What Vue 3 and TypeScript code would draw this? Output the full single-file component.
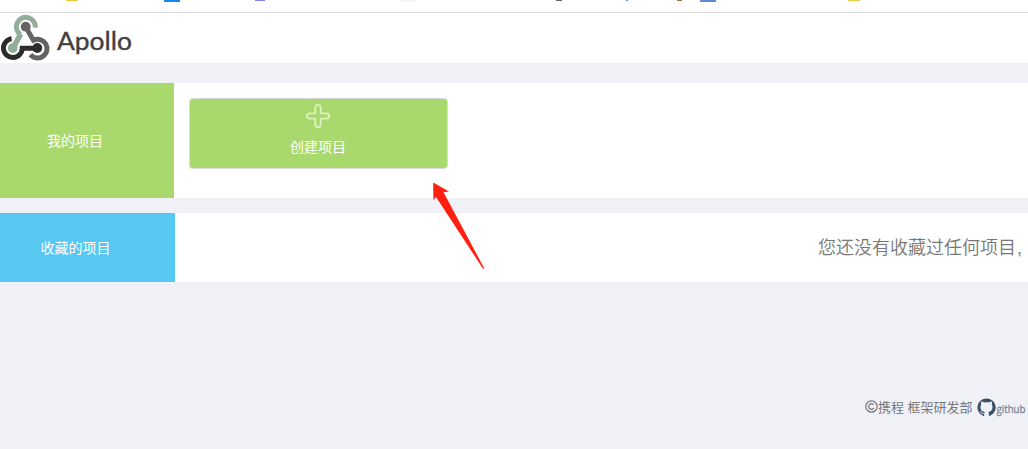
<script setup lang="ts">
interface Tab { left: number; width: number; height: number; color: string }

const tabs: Tab[] = [
  { left: 66, width: 12, height: 1, color: '#edc23d' },
  { left: 164, width: 16, height: 2, color: '#1787f5' },
  { left: 255, width: 10, height: 1, color: '#8585ed' },
  { left: 400, width: 16, height: 2, color: '#f5f5f5' },
  { left: 556, width: 6, height: 1, color: '#65656b' },
  { left: 626, width: 2, height: 1, color: '#4d9ad8' },
  { left: 677, width: 5, height: 1, color: '#98713f' },
  { left: 700, width: 16, height: 2, color: '#5c8bce' },
  { left: 848, width: 12, height: 1, color: '#edc94a' },
]
</script>

<template>
  <div class="page">
    <div class="strip">
      <i
        v-for="t in tabs"
        :key="t.left"
        class="fav"
        :style="{ left: t.left + 'px', width: t.width + 'px', height: t.height + 'px', background: t.color }"
      />
    </div>
    <header class="header">
      <svg class="logo" width="52" height="50" viewBox="0 13 52 50" fill="none">
        <path d="M20.6 34.8A9.5 9.5 0 1 1 35.3 27.6" stroke="#92ae9b" stroke-width="5" />
        <path d="M20.7 34L13 48" stroke="#92ae9b" stroke-width="5.6" />
        <path d="M11.6 38.8A9.4 9.4 0 1 0 22.2 48.2H37" stroke="#2d2c2d" stroke-width="4.9" />
        <path d="M25.7 27L33.4 40.2A9.4 9.4 0 1 1 30.4 54.6" stroke="#646263" stroke-width="4.9" />
        <circle cx="25.7" cy="26.7" r="4.9" fill="#646263" />
        <circle cx="12.8" cy="48.1" r="4.9" fill="#92ae9b" />
        <circle cx="37.3" cy="48" r="4.9" fill="#2d2c2d" />
      </svg>
      <svg class="brand" width="90" height="50" viewBox="0 0 90 50">
        <text x="5" y="37" textLength="75" lengthAdjust="spacingAndGlyphs">Apollo</text>
      </svg>
    </header>

    <section class="row mine">
      <div class="label green">我的项目</div>
      <div class="body">
        <button class="create">
          <svg width="26" height="26" viewBox="0 0 26 26" fill="none">
            <path
              d="M10.3 4.6a2.7 2.7 0 0 1 5.4 0v5.7h5.7a2.7 2.7 0 0 1 0 5.4h-5.7v5.7a2.7 2.7 0 0 1-5.4 0v-5.7H4.6a2.7 2.7 0 0 1 0-5.4h5.7Z"
              stroke="#fff" stroke-opacity=".6" stroke-width="1.8"
            />
          </svg>
          <span>创建项目</span>
        </button>
      </div>
    </section>

    <section class="row favorite">
      <div class="label blue">收藏的项目</div>
      <div class="empty">您还没有收藏过任何项目<span class="comma">,</span></div>
    </section>

    <footer class="footer">
      <svg class="copy" width="13" height="13" viewBox="0 0 13 13" fill="none" stroke="#777" stroke-width="1.2">
        <circle cx="6.5" cy="6.5" r="5.7" />
        <path d="M8.8 4.8A2.8 2.8 0 1 0 8.8 8.2" />
      </svg>
      <span class="owner">携程 框架研发部</span>
      <svg class="cat" width="19" height="19" viewBox="0 0 19 19">
        <path
          fill="#3b5068"
          d="M9.5.5a9 9 0 0 0-3 17.5c.5.1.7-.2.7-.5v-1.7c-2.2.4-3-.6-3.4-1.5l-.8-.9c.8-.2 1.5.2 2 1 .6.8 1.4 1 2.4.6l.3-.9C5.1 13.5 3.5 11.8 3.5 8.9c0-1 .2-1.8.7-2.5-.3-1-.2-2 .1-2.8 1.1 0 1.9.4 2.7 1 1.6-.4 3.4-.4 5 0 .8-.6 1.6-1 2.7-1 .3.8.4 1.8.1 2.8.5.7.7 1.5.7 2.5 0 2.9-1.6 4.6-4.2 5.2.4.4.6 1 .6 1.7v1.7c0 .3.2.6.7.5A9 9 0 0 0 9.5.5Z"
        />
      </svg>
      <svg class="hub" width="31" height="24" viewBox="0 0 31 24">
        <text x="0.5" y="16.6" textLength="29" lengthAdjust="spacingAndGlyphs">github</text>
      </svg>
    </footer>

    <svg class="arrow" width="54" height="90" viewBox="432 181 54 90">
      <path d="M433.2 182.5L449 191.5L443.5 192.3L484.2 268.2L483.2 269L436 197L433.4 200Z" fill="#ff2012" />
    </svg>
  </div>
</template>

<style>
body { margin: 0; overflow: hidden; background: #f0f1f7; }
</style>

<style scoped>
.page {
  position: relative;
  height: 449px;
  overflow: hidden;
  background: #f0f1f7;
  font-family: "Liberation Sans", "Noto Sans CJK SC", sans-serif;
  font-size: 14px;
}
.strip { position: relative; box-sizing: border-box; height: 13px; background: #fff; border-bottom: 1px solid #d9d9da; }
.fav { position: absolute; top: 0; }
.header { display: flex; height: 50px; background: #fff; }
.logo { flex: none; }
.brand text { font-family: Lato, sans-serif; font-size: 25px; fill: #403f40; stroke: #403f40; stroke-width: .4px; }
.row { display: flex; background: #fff; }
.mine { height: 115px; margin-top: 20px; }
.favorite { height: 69px; margin-top: 15px; }
.label { flex: none; display: flex; align-items: center; justify-content: center; color: #fff; box-sizing: border-box; }
.green { width: 174px; padding: 0 24px 2px 0; background: #a9d96c; }
.blue { width: 175px; padding: 0 24px 2px 0; background: #57c8f2; }
.body { padding: 15px; }
.create {
  display: flex;
  flex-direction: column;
  align-items: center;
  box-sizing: border-box;
  width: 259px;
  height: 71px;
  padding: 4px 1px 0 0;
  border: 1px solid #d8dad6;
  border-radius: 4px;
  background: #a9d96c;
  color: #fff;
  font: inherit;
}
.create svg { flex: none; }
.create span { margin-top: 8px; line-height: 20px; }
.empty { margin: 22px 0 0 643px; font-size: 18px; line-height: 26px; color: #777; font-weight: 350; white-space: nowrap; }
.comma { margin-left: 1px; }
.footer { display: flex; align-items: center; box-sizing: border-box; height: 60px; margin-top: 95px; padding-left: 865px; border-top: 1px solid #eeeff3; color: #777; font-size: 13px; }
.copy, .cat, .hub { flex: none; }
.copy { margin-bottom: 2px; }
.owner { white-space: nowrap; margin-bottom: 3px; }
.cat { margin-left: 4px; }
.hub text { font-family: "Open Sans", sans-serif; font-size: 11px; fill: #77869a; stroke: #77869a; stroke-width: .3px; }
.arrow { position: absolute; left: 432px; top: 181px; }
</style>
